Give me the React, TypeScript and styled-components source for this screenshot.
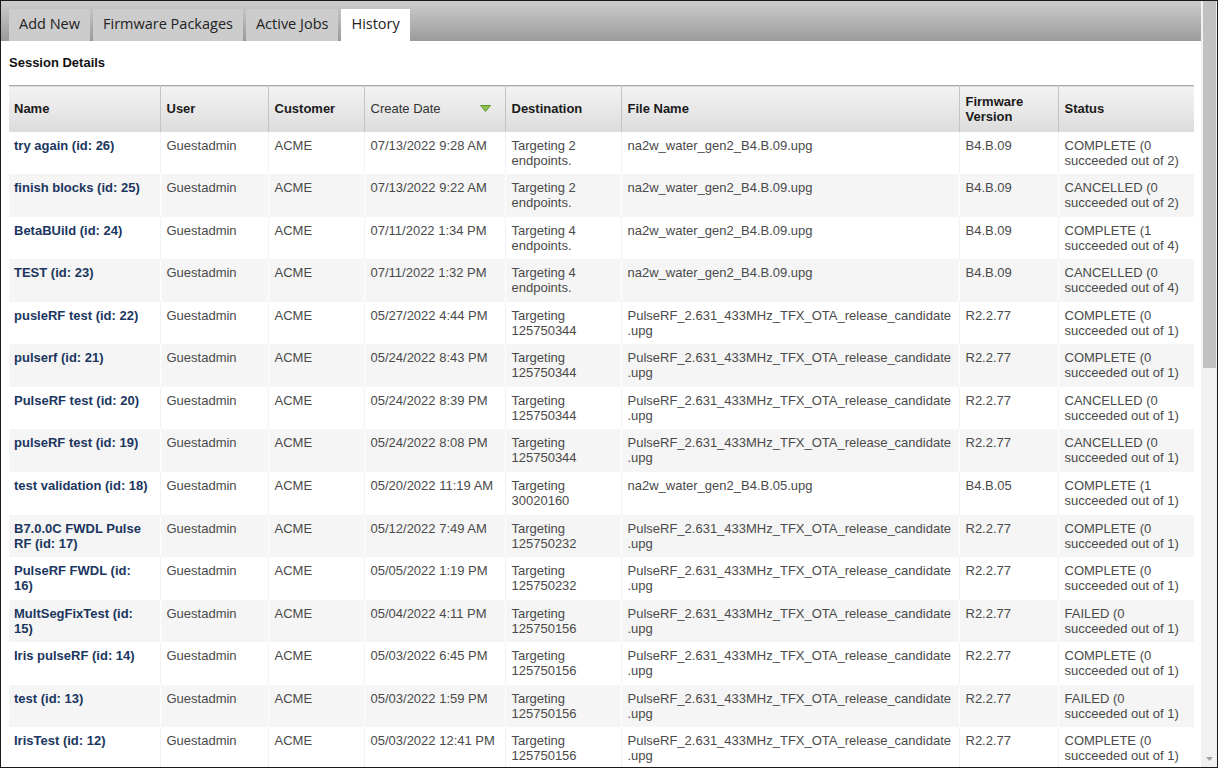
import styled, { createGlobalStyle } from 'styled-components';

const GlobalStyle = createGlobalStyle`
  html, body {
    margin: 0;
    padding: 0;
    background: #fff;
  }
  body {
    font-family: 'Liberation Sans', Arial, sans-serif;
  }
`;

type Job = {
  name: string;
  id: number;
  date: string;
  destination: string;
  file: string;
  version: string;
  status: string;
  ok: number;
  total: number;
};

const PULSE = 'PulseRF_2.631_433MHz_TFX_OTA_release_candidate.upg';
const WATER9 = 'na2w_water_gen2_B4.B.09.upg';

const jobs: Job[] = [
  { name: 'try again', id: 26, date: '07/13/2022 9:28 AM', destination: 'Targeting 2 endpoints.', file: WATER9, version: 'B4.B.09', status: 'COMPLETE', ok: 0, total: 2 },
  { name: 'finish blocks', id: 25, date: '07/13/2022 9:22 AM', destination: 'Targeting 2 endpoints.', file: WATER9, version: 'B4.B.09', status: 'CANCELLED', ok: 0, total: 2 },
  { name: 'BetaBUild', id: 24, date: '07/11/2022 1:34 PM', destination: 'Targeting 4 endpoints.', file: WATER9, version: 'B4.B.09', status: 'COMPLETE', ok: 1, total: 4 },
  { name: 'TEST', id: 23, date: '07/11/2022 1:32 PM', destination: 'Targeting 4 endpoints.', file: WATER9, version: 'B4.B.09', status: 'CANCELLED', ok: 0, total: 4 },
  { name: 'pusleRF test', id: 22, date: '05/27/2022 4:44 PM', destination: 'Targeting 125750344', file: PULSE, version: 'R2.2.77', status: 'COMPLETE', ok: 0, total: 1 },
  { name: 'pulserf', id: 21, date: '05/24/2022 8:43 PM', destination: 'Targeting 125750344', file: PULSE, version: 'R2.2.77', status: 'COMPLETE', ok: 0, total: 1 },
  { name: 'PulseRF test', id: 20, date: '05/24/2022 8:39 PM', destination: 'Targeting 125750344', file: PULSE, version: 'R2.2.77', status: 'CANCELLED', ok: 0, total: 1 },
  { name: 'pulseRF test', id: 19, date: '05/24/2022 8:08 PM', destination: 'Targeting 125750344', file: PULSE, version: 'R2.2.77', status: 'CANCELLED', ok: 0, total: 1 },
  { name: 'test validation', id: 18, date: '05/20/2022 11:19 AM', destination: 'Targeting 30020160', file: 'na2w_water_gen2_B4.B.05.upg', version: 'B4.B.05', status: 'COMPLETE', ok: 1, total: 1 },
  { name: 'B7.0.0C FWDL Pulse RF', id: 17, date: '05/12/2022 7:49 AM', destination: 'Targeting 125750232', file: PULSE, version: 'R2.2.77', status: 'COMPLETE', ok: 0, total: 1 },
  { name: 'PulseRF FWDL', id: 16, date: '05/05/2022 1:19 PM', destination: 'Targeting 125750232', file: PULSE, version: 'R2.2.77', status: 'COMPLETE', ok: 0, total: 1 },
  { name: 'MultSegFixTest', id: 15, date: '05/04/2022 4:11 PM', destination: 'Targeting 125750156', file: PULSE, version: 'R2.2.77', status: 'FAILED', ok: 0, total: 1 },
  { name: 'Iris pulseRF', id: 14, date: '05/03/2022 6:45 PM', destination: 'Targeting 125750156', file: PULSE, version: 'R2.2.77', status: 'COMPLETE', ok: 0, total: 1 },
  { name: 'test', id: 13, date: '05/03/2022 1:59 PM', destination: 'Targeting 125750156', file: PULSE, version: 'R2.2.77', status: 'FAILED', ok: 0, total: 1 },
  { name: 'IrisTest', id: 12, date: '05/03/2022 12:41 PM', destination: 'Targeting 125750156', file: PULSE, version: 'R2.2.77', status: 'COMPLETE', ok: 0, total: 1 },
];

const columns = [
  { label: 'Name', width: 151 },
  { label: 'User', width: 108 },
  { label: 'Customer', width: 96 },
  { label: 'Create Date', width: 141, sorted: true },
  { label: 'Destination', width: 116 },
  { label: 'File Name', width: 338 },
  { label: 'Firmware Version', width: 99 },
  { label: 'Status', width: 136 },
];

const Frame = styled.div`
  width: 1218px;
  height: 768px;
  box-sizing: border-box;
  border: 1px solid #1a1a1a;
  display: flex;
  overflow: hidden;
`;

const Main = styled.div`
  flex: 1;
  min-width: 0;
  overflow: hidden;
  display: flex;
  flex-direction: column;
`;

const TabBar = styled.div`
  height: 40px;
  flex-shrink: 0;
  box-sizing: border-box;
  padding: 7px 0 0 8px;
  display: flex;
  align-items: flex-end;
  gap: 3px;
  background: linear-gradient(to bottom, #cdcdcd 0%, #b4b4b4 50%, #9b9b9b 100%);
`;

const Tab = styled.div<{ $active?: boolean }>`
  height: 32px;
  box-sizing: border-box;
  display: flex;
  align-items: center;
  padding: 0 10px 4px;
  font-family: 'Open Sans', 'DejaVu Sans', sans-serif;
  font-size: 14.5px;
  color: #222;
  background: ${(p) => (p.$active ? '#fff' : '#cccccc')};
`;

const Content = styled.div`
  padding: 14px 7px 0 8px;
`;

const Heading = styled.div`
  font-size: 13px;
  font-weight: bold;
  color: #111;
  line-height: 15px;
  margin-bottom: 15px;
`;

const Table = styled.table`
  width: 1185px;
  border-collapse: collapse;
  table-layout: fixed;
  font-size: 13px;
  line-height: 15px;
`;

const HeadRow = styled.tr`
  height: 46px;
  background: linear-gradient(to bottom, #f3f3f3 0%, #e6e6e6 60%, #dcdcdc 100%);
  border-top: 1px solid #a8a8a8;
`;

const Th = styled.th<{ $sorted?: boolean }>`
  text-align: left;
  vertical-align: middle;
  padding: 0 6px;
  font-weight: ${(p) => (p.$sorted ? 'normal' : 'bold')};
  color: ${(p) => (p.$sorted ? '#333' : '#1a1a1a')};
  border-left: 1px solid #c4c4c4;
  &:first-child {
    border-left: none;
    padding-left: 5px;
  }
`;

const SortCell = styled.div`
  display: flex;
  align-items: center;
  justify-content: space-between;
  padding-right: 8px;
`;

const Row = styled.tr<{ $alt: boolean }>`
  height: 42.57px;
  background: ${(p) => (p.$alt ? '#f5f5f5' : '#fff')};
  & > td {
    border-left: 1px solid ${(p) => (p.$alt ? '#ffffff' : '#f2f2f2')};
  }
  & > td:first-child {
    border-left: none;
    padding-left: 5px;
    padding-right: 10px;
  }
`;

const Td = styled.td`
  vertical-align: top;
  padding: 6px 6px 5px;
  color: #4a4a4a;
  overflow-wrap: anywhere;
`;

const NameLink = styled.span`
  font-weight: bold;
  color: #1b365f;
`;

const Scrollbar = styled.div`
  width: 16px;
  flex-shrink: 0;
  background: #f1f1f1;
  display: flex;
  flex-direction: column;
  align-items: center;
  padding: 0 1px;
  box-sizing: border-box;
`;

const Thumb = styled.div`
  width: 13px;
  height: 367px;
  background: #c1c1c1;
`;

const ScrollSpacer = styled.div`
  flex: 1;
`;

const ScrollArrow = styled.div`
  height: 17px;
  display: flex;
  align-items: center;
  justify-content: center;
`;

function SortArrow() {
  return (
    <svg width="11" height="7" viewBox="0 0 11 7">
      <polygon points="0.5,0.5 10.5,0.5 5.5,6.5" fill="#8cc152" stroke="#5e9a2e" strokeWidth="1" />
    </svg>
  );
}

function formatFile(file: string) {
  const dot = file.lastIndexOf('.');
  return (
    <>
      {file.slice(0, dot)}
      <wbr />
      {file.slice(dot)}
    </>
  );
}

export default function App() {
  return (
    <>
      <GlobalStyle />
      <Frame>
        <Main>
          <TabBar>
            <Tab>Add New</Tab>
            <Tab>Firmware Packages</Tab>
            <Tab>Active Jobs</Tab>
            <Tab $active>History</Tab>
          </TabBar>
          <Content>
            <Heading>Session Details</Heading>
            <Table>
              <colgroup>
                {columns.map((c) => (
                  <col key={c.label} style={{ width: c.width }} />
                ))}
              </colgroup>
              <thead>
                <HeadRow>
                  {columns.map((c) => (
                    <Th key={c.label} $sorted={c.sorted}>
                      {c.sorted ? (
                        <SortCell>
                          {c.label}
                          <SortArrow />
                        </SortCell>
                      ) : (
                        c.label
                      )}
                    </Th>
                  ))}
                </HeadRow>
              </thead>
              <tbody>
                {jobs.map((job, i) => (
                  <Row key={job.id} $alt={i % 2 === 1}>
                    <Td>
                      <NameLink>
                        {job.name} (id: {job.id})
                      </NameLink>
                    </Td>
                    <Td>Guestadmin</Td>
                    <Td>ACME</Td>
                    <Td>{job.date}</Td>
                    <Td>{job.destination}</Td>
                    <Td>{formatFile(job.file)}</Td>
                    <Td>{job.version}</Td>
                    <Td>
                      {job.status} ({job.ok} succeeded out of {job.total})
                    </Td>
                  </Row>
                ))}
              </tbody>
            </Table>
          </Content>
        </Main>
        <Scrollbar>
          <Thumb />
          <ScrollSpacer />
          <ScrollArrow>
            <svg width="7" height="4" viewBox="0 0 7 4">
              <polygon points="0,0 7,0 3.5,4" fill="#a3a3a3" />
            </svg>
          </ScrollArrow>
        </Scrollbar>
      </Frame>
    </>
  );
}
